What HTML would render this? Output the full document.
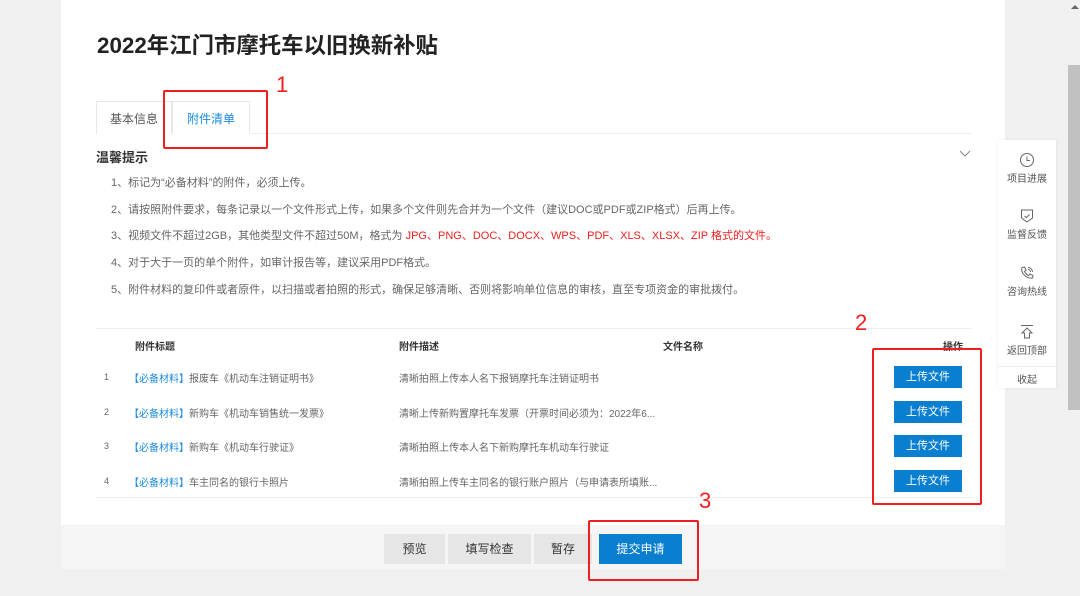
<!DOCTYPE html>
<html><head><meta charset="utf-8"><style>
*{margin:0;padding:0;box-sizing:border-box}
body{width:1080px;height:596px;overflow:hidden;background:#f0f0f0;font-family:"Liberation Sans","Noto Sans CJK SC",sans-serif;position:relative;color:#333}
.a{position:absolute;white-space:nowrap}
.card{position:absolute;left:61px;top:0;width:944px;height:525px;background:#fff}
.t{font-size:11px;color:#666}
.blue{color:#1a8be0}
.btn{position:absolute;background:#0a7fcf;color:#fff;font-size:11px;text-align:center;line-height:22px;width:68px;height:22px;left:894px}
.fb{position:absolute;top:534px;height:30px;line-height:30px;text-align:center;font-size:12px;background:#e6e6e6;color:#333}
.red{position:absolute;border:2px solid #f01e1e;border-radius:2px}
.rn{position:absolute;color:#f01e1e;font-size:22px;font-family:"Liberation Sans",sans-serif;font-weight:300}
.side{position:absolute;left:998px;top:140px;width:58px;height:248px;background:#fff;box-shadow:0 0 3px rgba(0,0,0,.08)}
.si{position:absolute;left:0;width:58px;text-align:center;font-size:10px;color:#555}
.si svg{display:block;margin:0 auto 2px}
</style></head><body>
<div class="card"></div>
<div style="position:absolute;left:1066px;top:0;width:14px;height:596px;background:#f1f1f1"></div>
<div style="position:absolute;left:1068px;top:65px;width:12px;height:345px;background:#c1c1c1"></div>
<div class="a" style="left:1071px;top:5px;width:0;height:0;border-left:4px solid transparent;border-right:4px solid transparent;border-bottom:4px solid #666"></div>

<div class="a" style="left:97px;top:28px;font-size:22.4px;font-weight:bold;color:#222">2022年江门市摩托车以旧换新补贴</div>

<div style="position:absolute;left:96px;top:133px;width:876px;height:1px;background:#eee"></div>
<div style="position:absolute;left:96px;top:101px;width:76px;height:33px;border:1px solid #e8e8e8;border-bottom:none;background:#fff;font-size:12px;color:#555;text-align:center;line-height:35px">基本信息</div>
<div style="position:absolute;left:172px;top:101px;width:78px;height:33px;border:1px solid #e8e8e8;border-bottom:1px solid #fff;background:#fff;font-size:12px;color:#1a8be0;text-align:center;line-height:35px">附件清单</div>
<div class="red" style="left:163px;top:90px;width:105px;height:59px"></div>
<div class="rn" style="left:276px;top:72px">1</div>

<div class="a" style="left:96px;top:147px;font-size:13px;font-weight:bold;color:#333">温馨提示</div>
<svg class="a" style="left:959px;top:150px" width="12" height="8"><path d="M1 1L6 6L11 1" stroke="#888" fill="none"/></svg>
<div class="a t" style="left:111px;top:174px">1、标记为“必备材料”的附件，必须上传。</div>
<div class="a t" style="left:111px;top:201px">2、请按照附件要求，每条记录以一个文件形式上传，如果多个文件则先合并为一个文件（建议DOC或PDF或ZIP格式）后再上传。</div>
<div class="a t" style="left:111px;top:227px">3、视频文件不超过2GB，其他类型文件不超过50M，格式为 <span style="color:#f01e1e">JPG、PNG、DOC、DOCX、WPS、PDF、XLS、XLSX、ZIP 格式的文件。</span></div>
<div class="a t" style="left:111px;top:254px">4、对于大于一页的单个附件，如审计报告等，建议采用PDF格式。</div>
<div class="a t" style="left:111px;top:281px">5、附件材料的复印件或者原件，以扫描或者拍照的形式，确保足够清晰、否则将影响单位信息的审核，直至专项资金的审批拨付。</div>

<div style="position:absolute;left:96px;top:328px;width:876px;height:1px;background:#eee"></div>
<div style="position:absolute;left:96px;top:497px;width:876px;height:1px;background:#eee"></div>
<div class="a" style="left:135px;top:338px;font-size:10px;font-weight:bold;color:#333">附件标题</div>
<div class="a" style="left:399px;top:338px;font-size:10px;font-weight:bold;color:#333">附件描述</div>
<div class="a" style="left:663px;top:338px;font-size:10px;font-weight:bold;color:#333">文件名称</div>
<div class="a" style="left:943px;top:338px;font-size:10px;font-weight:bold;color:#333">操作</div>

<div class="a t" style="left:104px;top:372px;font-size:9px">1</div>
<div class="a t" style="left:129px;top:370px;font-size:10px"><span class="blue">【必备材料】</span>报废车《机动车注销证明书》</div>
<div class="a t" style="left:399px;top:370px;font-size:10px">清晰拍照上传本人名下报销摩托车注销证明书</div>
<div class="a t" style="left:104px;top:407px;font-size:9px">2</div>
<div class="a t" style="left:129px;top:405px;font-size:10px"><span class="blue">【必备材料】</span>新购车《机动车销售统一发票》</div>
<div class="a t" style="left:399px;top:405px;font-size:10px">清晰上传新购置摩托车发票（开票时间必须为：2022年6...</div>
<div class="a t" style="left:104px;top:441px;font-size:9px">3</div>
<div class="a t" style="left:129px;top:439px;font-size:10px"><span class="blue">【必备材料】</span>新购车《机动车行驶证》</div>
<div class="a t" style="left:399px;top:439px;font-size:10px">清晰拍照上传本人名下新购摩托车机动车行驶证</div>
<div class="a t" style="left:104px;top:476px;font-size:9px">4</div>
<div class="a t" style="left:129px;top:474px;font-size:10px"><span class="blue">【必备材料】</span>车主同名的银行卡照片</div>
<div class="a t" style="left:399px;top:474px;font-size:10px">清晰拍照上传车主同名的银行账户照片（与申请表所填账...</div>

<div class="btn" style="top:366px">上传文件</div>
<div class="btn" style="top:401px">上传文件</div>
<div class="btn" style="top:435px">上传文件</div>
<div class="btn" style="top:470px">上传文件</div>
<div class="red" style="left:872px;top:348px;width:110px;height:157px"></div>
<div class="rn" style="left:855px;top:310px">2</div>

<div style="position:absolute;left:61px;top:525px;width:944px;height:44px;background:#f5f5f5"></div>
<div class="fb" style="left:384px;width:61px">预览</div>
<div class="fb" style="left:448px;width:83px">填写检查</div>
<div class="fb" style="left:534px;width:58px">暂存</div>
<div class="fb" style="left:599px;width:83px;background:#0a7fcf;color:#fff">提交申请</div>
<div class="red" style="left:588px;top:520px;width:111px;height:61px"></div>
<div class="rn" style="left:699px;top:488px">3</div>

<div class="side">
<div class="si" style="top:12px"><svg width="16" height="16"><circle cx="8" cy="8" r="6.5" fill="none" stroke="#666"/><path d="M8 4.5V8.5H11" fill="none" stroke="#666"/></svg>项目进展</div>
<div class="si" style="top:68px"><svg width="16" height="16"><path d="M2.5 2H13.5V10L8 14L2.5 10Z" fill="none" stroke="#666"/><path d="M5.5 8L7.5 9.5L10.5 6.5" fill="none" stroke="#666"/></svg>监督反馈</div>
<div class="si" style="top:125px"><svg width="16" height="16"><path d="M3 2.5L5.5 2L7 5L5.5 6.5Q7 9.5 9.5 10.5L11 9L14 10.5L13.5 13Q8 14 4 8.5Q2 5 3 2.5Z" fill="none" stroke="#666"/><path d="M9 2.5A4.5 4.5 0 0 1 13.5 7M9 4.5A2.5 2.5 0 0 1 11.5 7" fill="none" stroke="#666"/></svg>咨询热线</div>
<div class="si" style="top:184px"><svg width="16" height="16"><path d="M2 1.5H14" stroke="#666"/><path d="M8 4L3 9H5.5V14H10.5V9H13Z" fill="none" stroke="#666"/></svg>返回顶部</div>
<div style="position:absolute;left:0;top:226px;width:58px;height:1px;background:#eee"></div>
<div class="si" style="top:231px">收起</div>
</div>
</body></html>
